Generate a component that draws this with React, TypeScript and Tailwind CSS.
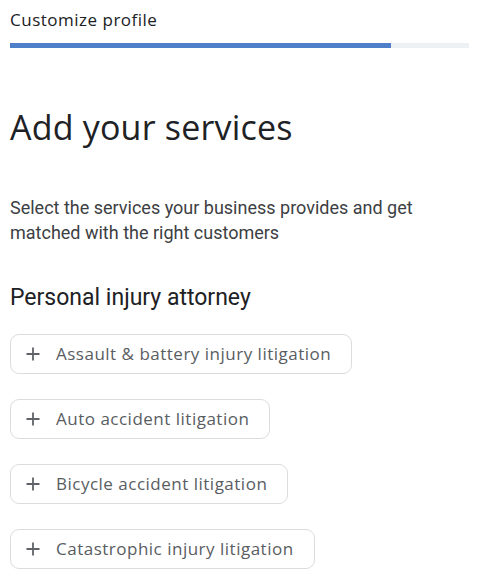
import React from 'react';

const services = [
  'Assault & battery injury litigation',
  'Auto accident litigation',
  'Bicycle accident litigation',
  'Catastrophic injury litigation',
];

const PlusIcon = () => (
  <svg width="14" height="14" viewBox="0 0 14 14" className="shrink-0">
    <path d="M7 0.5v13M0.5 7h13" stroke="#5f6368" strokeWidth="1.8" fill="none" />
  </svg>
);

const App = () => {
  return (
    <div
      className="w-[480px] h-[580px] overflow-hidden bg-white px-[10px] pt-[8px]"
      style={{ fontFamily: '"Open Sans", Roboto, Arial, sans-serif' }}
    >
      {/* Header + progress */}
      <div className="text-[17px] leading-[24px] tracking-[0.5px] text-[#202124] font-medium">Customize profile</div>
      <div className="mt-[11px] h-[5px] w-[459px] bg-[#eef1f3]">
        <div className="h-full w-[381px] bg-[#4f7fc9]" />
      </div>

      <h1 className="mt-[57px] text-[34px] leading-[44px] text-[#202124] font-normal tracking-[0.2px]">
        Add your services
      </h1>

      <p
        className="mt-[46px] w-[440px] text-[18px] leading-[25px] text-[#3c4043]"
        style={{ fontFamily: 'Roboto, Arial, sans-serif' }}
      >
        Select the services your business provides and get matched with the right customers
      </p>

      <h2
        className="mt-[38px] text-[23px] leading-[30px] text-[#202124] font-normal"
        style={{ fontFamily: 'Roboto, Arial, sans-serif' }}
      >
        Personal injury attorney
      </h2>

      {/* Service chips */}
      <div className="mt-[21px] flex flex-col items-start gap-[25px]">
        {services.map((s) => (
          <button
            key={s}
            className="flex h-[40px] items-center gap-[16px] rounded-[9px] border border-[#dadce0] bg-white pl-[15px] pr-[20px] text-[17px] tracking-[0.5px] font-medium text-[#595d62]"
          >
            <PlusIcon />
            <span>{s}</span>
          </button>
        ))}
      </div>
    </div>
  );
};

export default App;
